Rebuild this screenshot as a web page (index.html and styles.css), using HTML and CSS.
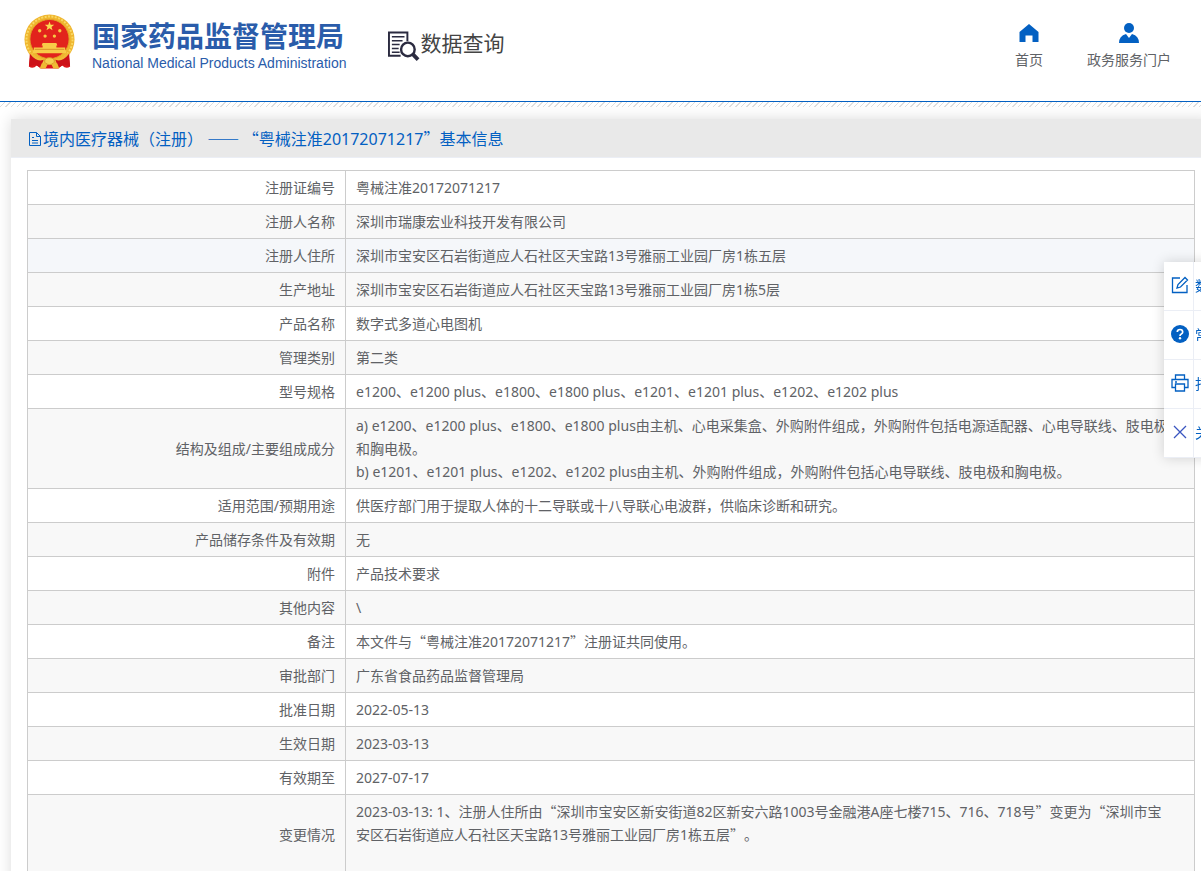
FILE: index.html
```html
<!DOCTYPE html>
<html lang="zh-CN">
<head>
<meta charset="utf-8">
<title>数据查询</title>
<link rel="stylesheet" href="styles.css">
</head>
<body>
<header class="header">
  <a class="brand" href="#">
    <svg class="emblem" viewBox="0 0 52 56" aria-hidden="true">
      <path d="M7 36L5 53Q9 56 13 52L17 55H35L39 52Q43 56 47 53L45 36Z" fill="#d9161b"/>
      <circle cx="26" cy="25.500" r="25.500" fill="#efb52e"/>
      <circle cx="26" cy="25.500" r="23.500" fill="none" stroke="#f9d964" stroke-width="2" stroke-dasharray="2 1.500"/>
      <circle cx="26" cy="25" r="20" fill="#e2231c" stroke="#e0a126"/>
      <path d="M26 7l1.200 3.400h3.600l-2.800 2.200 1.100 3.500-3.100-2.100-3.100 2.100 1.100-3.500-2.800-2.200h3.600z" fill="#fbdc52"/>
      <g fill="#f6c944"><circle cx="16" cy="16.500" r="1.700"/><circle cx="36.500" cy="16.500" r="1.700"/><circle cx="21.500" cy="22" r="1.700"/><circle cx="31" cy="22" r="1.700"/></g>
      <path d="M19 29h14l1 2.500h-1v2h9v3h1v3H9v-3h1v-3h9v-2h-1z" fill="#f8cc48"/>
      <path d="M11 35.500H41" stroke="#da952a"/>
      <path d="M6 38Q15 47 26 47T46 38L46 43Q40 50 33 49Q26 44 19 49Q12 50 6 43Z" fill="#f1bb37"/>
      <path d="M6 40Q13 49 20 46L17 54 11 51 5 53ZM46 40Q39 49 32 46L35 54 41 51 47 53Z" fill="#cc1118"/>
      <path d="M18 50Q26 44 34 50L36 55H30L28 51H24L22 55H16Z" fill="#efba34"/>
      <ellipse cx="26" cy="47.500" rx="5" ry="3.500" fill="#f7cf50" stroke="#d8982a"/>
    </svg>
    <span class="brand-text">
      <span class="brand-cn">国家药品监督管理局</span>
      <span class="brand-en">National Medical Products Administration</span>
    </span>
  </a>
  <a class="query" href="#">
    <svg class="query-icon" viewBox="0 0 33 32" fill="none" stroke="#2b2b40" stroke-width="2" aria-hidden="true">
      <path d="M20 11V2H1V26H13"/>
      <path d="M4 6.500H17M4 10.500H15M4 14.500H12M4 18.500H11M4 22.500H12" stroke-width="1.500"/>
      <circle cx="20.500" cy="19.500" r="7" stroke-width="2.500"/>
      <path d="M25.500 24.500L31 30" stroke-width="4"/>
    </svg>
    <span>数据查询</span>
  </a>
  <nav class="nav">
    <a href="#">
      <svg class="nav-icon" viewBox="0 0 20 20" aria-hidden="true"><path d="M10 1L.5 9V19H6.500V12.500H13.500V19H19.500V9Z" fill="#0360c2"/></svg>
      <span>首页</span>
    </a>
    <a href="#">
      <svg class="nav-icon" viewBox="0 0 20 20" aria-hidden="true"><circle cx="10" cy="5" r="5" fill="#0360c2"/><path d="M0 20Q0 13 7 11L10 15 13 11Q20 13 20 20Z" fill="#0360c2"/></svg>
      <span>政务服务门户</span>
    </a>
  </nav>
</header>
<div class="hatch"></div>
<main class="panel">
  <h1 class="panel-title">
    <svg class="doc-icon" viewBox="0 0 16 16" fill="none" stroke="#0360c2" aria-hidden="true"><path d="M2.500 1.500H9.500L13.500 5.500V14.500H2.500ZM9.500 1.500V5.500H13.500M5 6.500H7M5 9.500H11M5 12H11"/></svg>
    <span>境内医疗器械（注册） <span class="cjk">—— “</span>粤械注准20172071217<span class="cjk">”</span>基本信息</span>
  </h1>
  <div class="panel-body">
    <table class="info">
      <tbody>
        <tr><th scope="row">注册证编号</th><td>粤械注准20172071217</td></tr>
        <tr><th scope="row">注册人名称</th><td>深圳市瑞康宏业科技开发有限公司</td></tr>
        <tr class="active"><th scope="row">注册人住所</th><td>深圳市宝安区石岩街道应人石社区天宝路13号雅丽工业园厂房1栋五层</td></tr>
        <tr><th scope="row">生产地址</th><td>深圳市宝安区石岩街道应人石社区天宝路13号雅丽工业园厂房1栋5层</td></tr>
        <tr><th scope="row">产品名称</th><td>数字式多道心电图机</td></tr>
        <tr><th scope="row">管理类别</th><td>第二类</td></tr>
        <tr><th scope="row">型号规格</th><td>e1200、e1200 plus、e1800、e1800 plus、e1201、e1201 plus、e1202、e1202 plus</td></tr>
        <tr><th scope="row">结构及组成/主要组成成分</th><td>a) e1200、e1200 plus、e1800、e1800 plus由主机、心电采集盒、外购附件组成，外购附件包括电源适配器、心电导联线、肢电极和胸电极。<br>b) e1201、e1201 plus、e1202、e1202 plus由主机、外购附件组成，外购附件包括心电导联线、肢电极和胸电极。</td></tr>
        <tr><th scope="row">适用范围/预期用途</th><td>供医疗部门用于提取人体的十二导联或十八导联心电波群，供临床诊断和研究。</td></tr>
        <tr><th scope="row">产品储存条件及有效期</th><td>无</td></tr>
        <tr><th scope="row">附件</th><td>产品技术要求</td></tr>
        <tr><th scope="row">其他内容</th><td>\</td></tr>
        <tr><th scope="row">备注</th><td>本文件与<span class="cjk">“</span>粤械注准20172071217<span class="cjk">”</span>注册证共同使用。</td></tr>
        <tr><th scope="row">审批部门</th><td>广东省食品药品监督管理局</td></tr>
        <tr><th scope="row">批准日期</th><td>2022-05-13</td></tr>
        <tr><th scope="row">生效日期</th><td>2023-03-13</td></tr>
        <tr><th scope="row">有效期至</th><td>2027-07-17</td></tr>
        <tr><th scope="row">变更情况</th><td>2023-03-13: 1、注册人住所由<span class="cjk">“</span>深圳市宝安区新安街道82区新安六路1003号金融港A座七楼715、716、718号<span class="cjk">”</span>变更为<span class="cjk">“</span>深圳市宝安区石岩街道应人石社区天宝路13号雅丽工业园厂房1栋五层<span class="cjk">”。</span><br><br></td></tr>
      </tbody>
    </table>
  </div>
</main>
<aside class="tools">
  <button type="button"><span class="tool-icon"><svg viewBox="0 0 18 18" fill="none" stroke="#0360c2" stroke-width="1.300" aria-hidden="true"><path d="M9 2H1.500V16.500H16V9M6 12l1-3.500L14 1.500 16.500 4 9.500 11Z"/></svg></span><span>数据</span></button>
  <button type="button"><span class="tool-icon"><svg viewBox="0 0 18 18" aria-hidden="true"><circle cx="9" cy="9" r="9" fill="#0360c2"/><path d="M6.300 7Q6.300 4.500 9 4.500T11.700 7Q11.700 8.200 10.300 9T9 11" fill="none" stroke="#fff" stroke-width="1.700"/><circle cx="9" cy="13.300" r="1.200" fill="#fff"/></svg></span><span>常见</span></button>
  <button type="button"><span class="tool-icon"><svg viewBox="0 0 18 18" fill="none" stroke="#0360c2" stroke-width="1.300" aria-hidden="true"><path d="M4.500 5.500V1H13.500V5.500M4.500 13.500H1V5.500H17V13.500H13.500M4.500 10H13.500V17H4.500ZM4 8H6"/></svg></span><span>打印</span></button>
  <button type="button"><span class="tool-icon"><svg viewBox="0 0 18 18" fill="none" stroke="#3a55c0" stroke-width="1.300" aria-hidden="true"><path d="M3 3L15 15M15 3L3 15"/></svg></span><span>关闭</span></button>
</aside>
</body>
</html>
```
FILE: styles.css
```css
* { box-sizing: border-box; }
body {
  margin: 0;
  overflow: hidden;
  background: #fff;
  color: #606266;
  font: 14px/23px "Noto Sans", "Noto Sans CJK SC", sans-serif;
  text-spacing-trim: space-all;
}
a { color: inherit; text-decoration: none; }
.cjk { font-family: "Noto Sans CJK SC", sans-serif; }

.header {
  display: flex;
  align-items: flex-start;
  height: 102px;
  padding: 14px 30px 0 24px;
  border-bottom: 1px solid #0360c2;
}
.brand { display: flex; gap: 17px; color: #2a5caa; }
.emblem { width: 51px; height: 56px; }
.brand-text { display: flex; flex-direction: column; padding-top: 3px; white-space: nowrap; }
.brand-cn { font: 700 28px/36px "Noto Sans CJK SC", sans-serif; }
.brand-en { font: 14px/20px "Liberation Sans", sans-serif; }
.query {
  display: flex;
  margin-left: 42px;
  padding-top: 14px;
  color: #444;
  font-size: 21px;
  line-height: 30px;
}
.query-icon { width: 32px; height: 32px; margin-top: 2px; }
.nav { display: flex; gap: 44px; margin-left: auto; padding-top: 9px; }
.nav a { display: flex; flex-direction: column; align-items: center; gap: 5px; }
.nav-icon { width: 20px; height: 20px; }

.hatch {
  height: 5px;
  background: repeating-linear-gradient(135deg, #fff 0 3px, #dedede 3px 4px);
}

.panel {
  margin: 12px -10px 0 11px;
  background: #fff;
  box-shadow: 0 0 14px rgba(0, 0, 0, 0.14);
}
.panel-title {
  display: flex;
  align-items: center;
  height: 39px;
  margin: 0;
  padding: 2px 16px 0;
  background: #e9e9e9;
  border-bottom: 1px solid #ebeef5;
  color: #0360c2;
  font-size: 16px;
  font-weight: 400;
}
.doc-icon { width: 16px; height: 16px; }
.panel-body { padding: 12px 16px 16px; }
.info { width: 100%; border-collapse: collapse; table-layout: fixed; }
.info th, .info td { padding: 5px 10px; border: 1px solid #ccc; vertical-align: middle; }
.info td { padding-right: 22px; }
.info th { width: 318px; font-weight: 400; text-align: right; }
.info tr:nth-child(even) { background: #f8f8f8; }
.info .active { background: #f5f7fa; }

.tools {
  position: fixed;
  top: 262px;
  left: calc(100% - 37px);
  width: 120px;
  background: #fff;
  box-shadow: 0 0 12px rgba(0, 0, 0, 0.16);
}
.tools button {
  display: flex;
  align-items: stretch;
  width: 100%;
  height: 49px;
  padding: 0;
  border: 0;
  border-bottom: 1px solid #ebeef5;
  background: none;
  color: #0360c2;
  font: inherit;
  line-height: 48px;
}
.tool-icon {
  display: flex;
  align-items: center;
  width: 30px;
  padding: 0 0 3px 7px;
  border-right: 1px solid #ebeef5;
  margin-right: 1px;
}
.tool-icon svg { width: 18px; height: 18px; }
```
